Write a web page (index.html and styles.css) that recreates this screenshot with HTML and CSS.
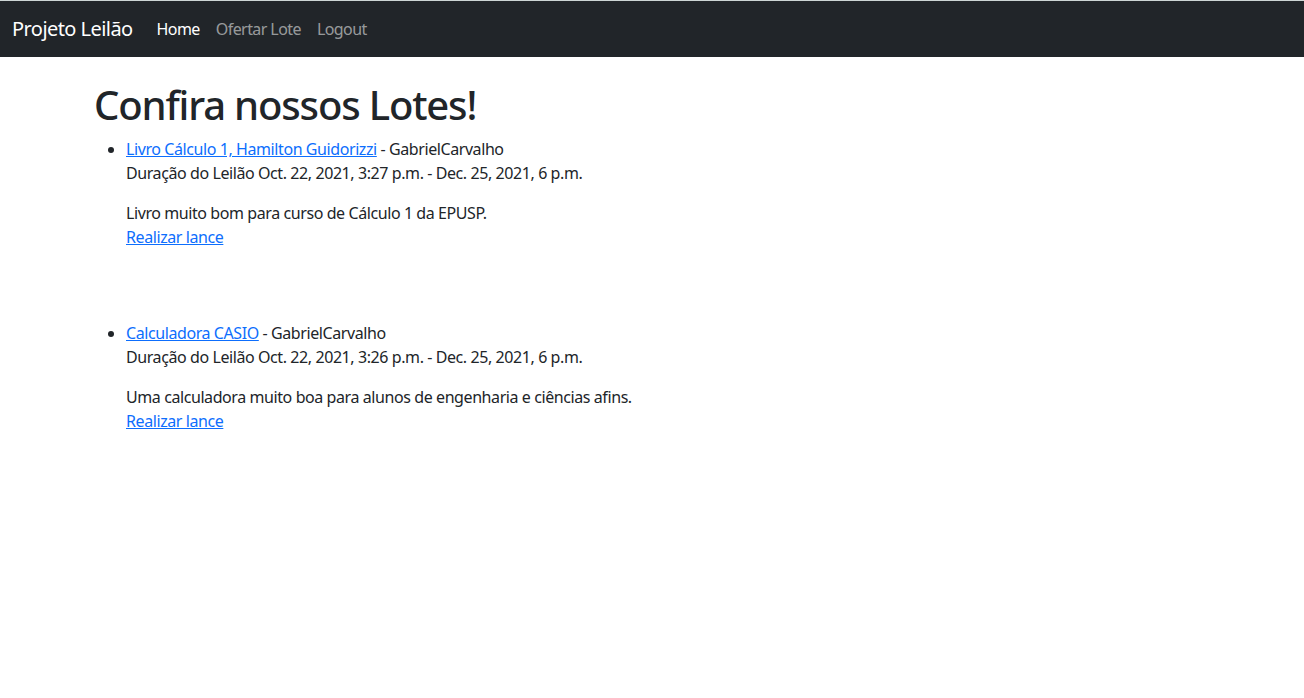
FILE: index.html
```html
<!DOCTYPE html>
<html lang="pt-br">
<head>
<meta charset="utf-8">
<title>Projeto Leilão</title>
<link rel="stylesheet" href="styles.css">
</head>
<body>
<nav class="navbar">
  <a class="brand" href="#">Projeto Leilão</a>
  <ul class="nav-links">
    <li><a class="nav-link active" href="#">Home</a></li>
    <li><a class="nav-link" href="#">Ofertar Lote</a></li>
    <li><a class="nav-link" href="#">Logout</a></li>
  </ul>
</nav>
<main class="container">
  <h1 class="title">Confira nossos Lotes!</h1>
  <ul class="lots">
    <li class="lot">
      <div><a class="link" href="#">Livro Cálculo 1, Hamilton Guidorizzi</a> - GabrielCarvalho</div>
      <p class="duration">Duração do Leilão Oct. 22, 2021, 3:27 p.m. - Dec. 25, 2021, 6 p.m.</p>
      <p class="desc">Livro muito bom para curso de Cálculo 1 da EPUSP.<br><a class="link" href="#">Realizar lance</a></p>
    </li>
    <li class="lot">
      <div><a class="link" href="#">Calculadora CASIO</a> - GabrielCarvalho</div>
      <p class="duration">Duração do Leilão Oct. 22, 2021, 3:26 p.m. - Dec. 25, 2021, 6 p.m.</p>
      <p class="desc">Uma calculadora muito boa para alunos de engenharia e ciências afins.<br><a class="link" href="#">Realizar lance</a></p>
    </li>
  </ul>
</main>
</body>
</html>
```

FILE: styles.css
```css
* { box-sizing: border-box; }
html, body { margin: 0; padding: 0; }
body {
  font-family: "Noto Sans", "Liberation Sans", sans-serif;
  font-size: 16px;
  line-height: 24px;
  letter-spacing: -0.026em;
  color: #212529;
  background: #fff;
}
.navbar {
  display: flex;
  align-items: center;
  height: 57px;
  border-top: 1px solid #cdd5d4;
  background: #212529;
  padding: 0 12px;
}
.brand {
  font-size: 20px;
  line-height: 30px;
  letter-spacing: -0.028em;
  color: #fff;
  text-decoration: none;
  margin-right: 16px;
  padding: 5px 0;
}
.nav-links {
  display: flex;
  list-style: none;
  margin: 0;
  padding: 0;
}
.nav-link {
  display: block;
  padding: 8px 8px;
  letter-spacing: -0.036em;
  color: rgba(255,255,255,0.55);
  text-decoration: none;
}
.nav-link.active { color: #fff; }
.container {
  max-width: 1140px;
  margin: 0 auto;
  padding: 0 12px;
}
.title {
  font-size: 40px;
  line-height: 48px;
  font-weight: 500;
  letter-spacing: -0.029em;
  margin: 24px 0 8px;
}
.lots {
  margin: 0;
  padding-left: 32px;
}
.lot { margin-bottom: 72px; }
.duration { margin: 0 0 16px; }
.desc { margin: 0; }
.link { color: #0d6efd; text-decoration: underline; }
```
